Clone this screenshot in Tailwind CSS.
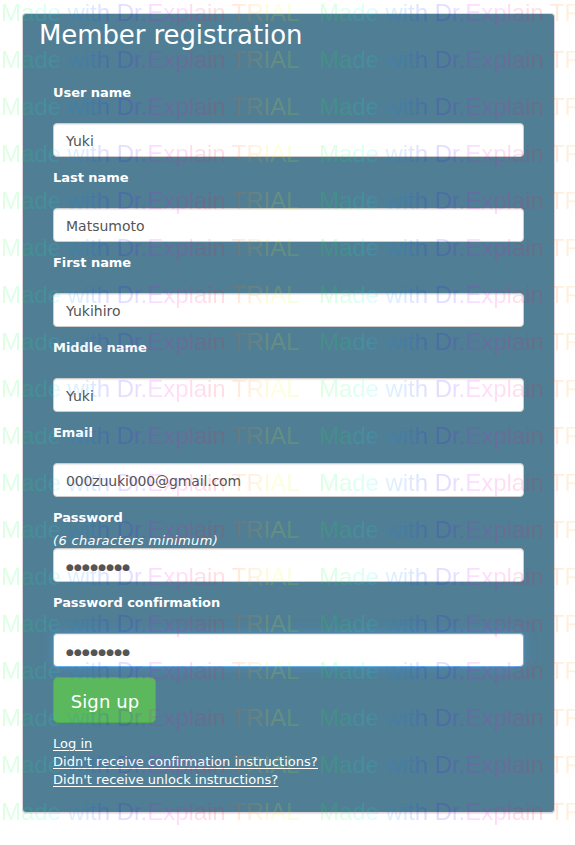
<!DOCTYPE html>
<html lang="en">
<head>
<meta charset="utf-8">
<title>Member registration</title>
<script src="https://cdn.jsdelivr.net/npm/@tailwindcss/browser@4"></script>
</head>
<body class="relative h-[845px] overflow-hidden bg-white font-['DejaVu_Sans',sans-serif] text-[13px] leading-[18px] text-white">
<main class="ml-[22px] mt-[13px] flex h-[800px] w-[533px] flex-col rounded-[4px] border border-[#ddd5db] bg-[#507e95] px-[30px] shadow-[0_1px_1px_rgba(0,0,0,0.1)]">
  <h1 class="-ml-[14px] h-[70px] whitespace-nowrap pt-[3px] text-[26px] leading-[36px] tracking-[-0.1px]">Member registration</h1>
  <form id="fields" class="flex w-[471px] flex-col"></form>
  <button class="-mt-[2px] h-[46px] w-[103px] shrink-0 rounded-[5px] border border-[#4cae4c] bg-[#5cb85c] pt-1 pl-px text-[18px] leading-[24px] tracking-[0.1px]">Sign up</button>
  <nav class="mt-[12px] flex flex-col items-start whitespace-nowrap tracking-[0.02px] underline underline-offset-2">
    <a>Log in</a>
    <a>Didn't receive confirmation instructions?</a>
    <a>Didn't receive unlock instructions?</a>
  </nav>
</main>
<div id="watermark" class="pointer-events-none absolute left-0 top-0 h-[845px] w-[575px] overflow-hidden opacity-[0.13]"></div>
<script>
const fields = [['User name','Yuki'],['Last name','Matsumoto'],['First name','Yukihiro'],['Middle name','Yuki'],['Email','000zuuki000@gmail.com'],['Password','●●●●●●●●','(6 characters minimum)'],['Password confirmation','●●●●●●●●']];
document.getElementById('fields').innerHTML = fields.map(([label, value, hint], i) => {
  const look = i === 6 ? 'border-[#66afe9] shadow-[inset_0_1px_1px_rgba(0,0,0,0.08),0_0_12px_rgba(82,160,220,0.5)]' : 'border-[#ccc] shadow-[inset_0_1px_1px_rgba(0,0,0,0.08)]';
  const type = i > 4 ? 'text-[9px] tracking-[0.2px] pt-[3px]' : i === 4 ? 'text-[14px] pt-px tracking-[-0.13px]' : 'text-[14px] pt-px';
  return `<div class="flex h-[85px] flex-col"><label class="h-[18px] font-bold tracking-[-0.05px]">${label}</label><em class="h-[21px] pt-[5px] tracking-[0.35px]">${hint || ''}</em><div class="flex h-[34px] items-center rounded-[4px] border bg-white px-[12px] text-[#555] ${look}"><span class="${type}">${value}</span></div></div>`;
}).join('');
const phrase = '<span class="block w-[318px] shrink-0 whitespace-nowrap"><span class="inline-block tracking-[-0.04px] bg-[linear-gradient(90deg,#00ff20_0%,#00ff60_8%,#00fff0_17%,#0090ff_23%,#0070ff_29%,#1800ff_37%,#4000ff_44%,#e000ff_51%,#ff00c0_60%,#ff0060_67%,#ff1020_74%,#ff7000_80%,#ffb000_86%,#ffff00_92%,#a0ff00_100%)] bg-clip-text text-transparent">Made with Dr.Explain TRIAL</span></span>';
document.getElementById('watermark').innerHTML = Array.from({length: 18}, () => `<div class="relative -top-px flex h-[47px] w-[640px] pl-px font-['Liberation_Sans',Arial,sans-serif] text-[24px] leading-[27px]">${phrase}${phrase}</div>`).join('');
</script>
</body>
</html>
